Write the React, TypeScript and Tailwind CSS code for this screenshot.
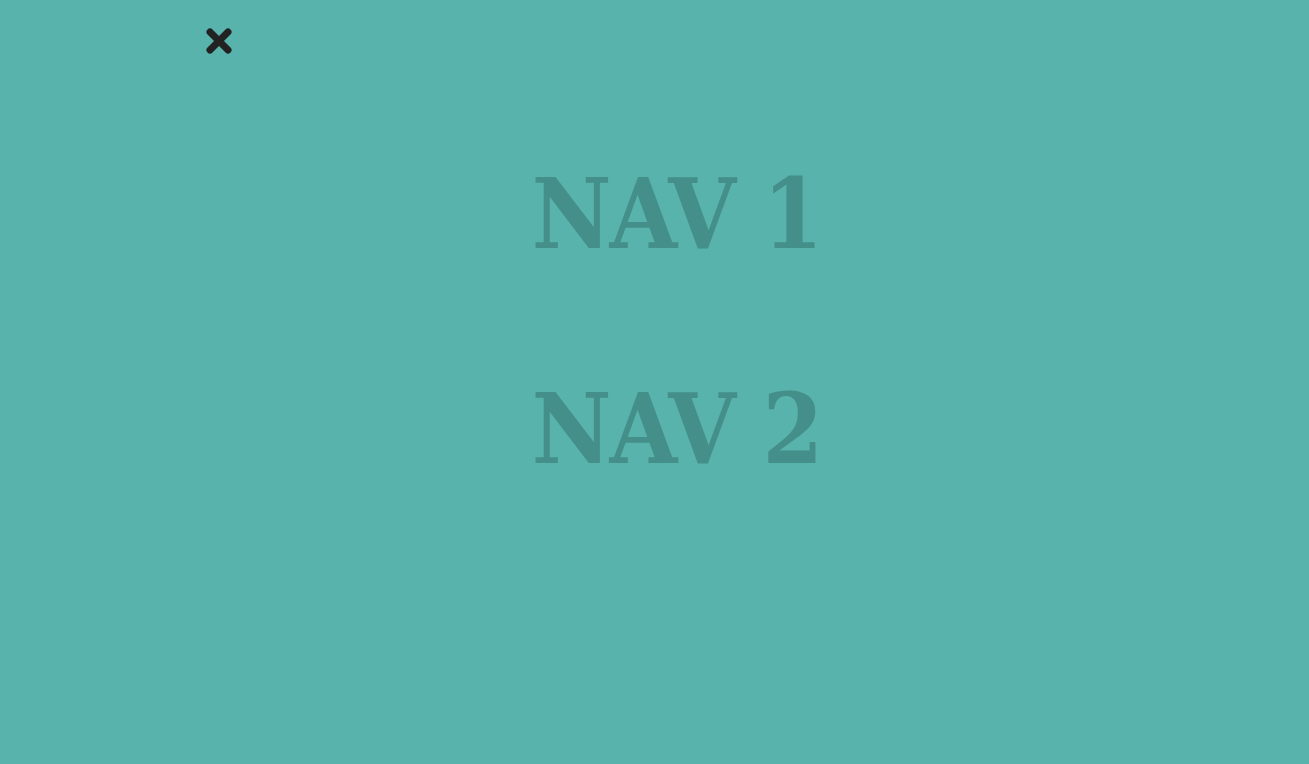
export default function App() {
  return (
    <div className="min-h-screen w-full bg-[#57b3ab] relative">
      <button className="absolute left-[203px] top-[25px] w-[32px] h-[32px] flex items-center justify-center">
        <svg viewBox="0 0 32 32" className="w-[32px] h-[32px]">
          <path d="M7 7 L25 25 M25 7 L7 25" stroke="#222222" strokeWidth="7" strokeLinecap="round" />
        </svg>
      </button>
      <nav className="pt-[154px] pl-[44px]">
        <ul
          className="flex flex-col items-center gap-[95px]"
          style={{ fontFamily: '"DejaVu Serif Condensed", "DejaVu Serif", serif' }}
        >
          <li className="text-[97px] leading-[120px] font-bold tracking-[-0.02em] text-[#458f8a]">NAV 1</li>
          <li className="text-[97px] leading-[120px] font-bold tracking-[-0.02em] text-[#458f8a]">NAV 2</li>
        </ul>
      </nav>
    </div>
  );
}
